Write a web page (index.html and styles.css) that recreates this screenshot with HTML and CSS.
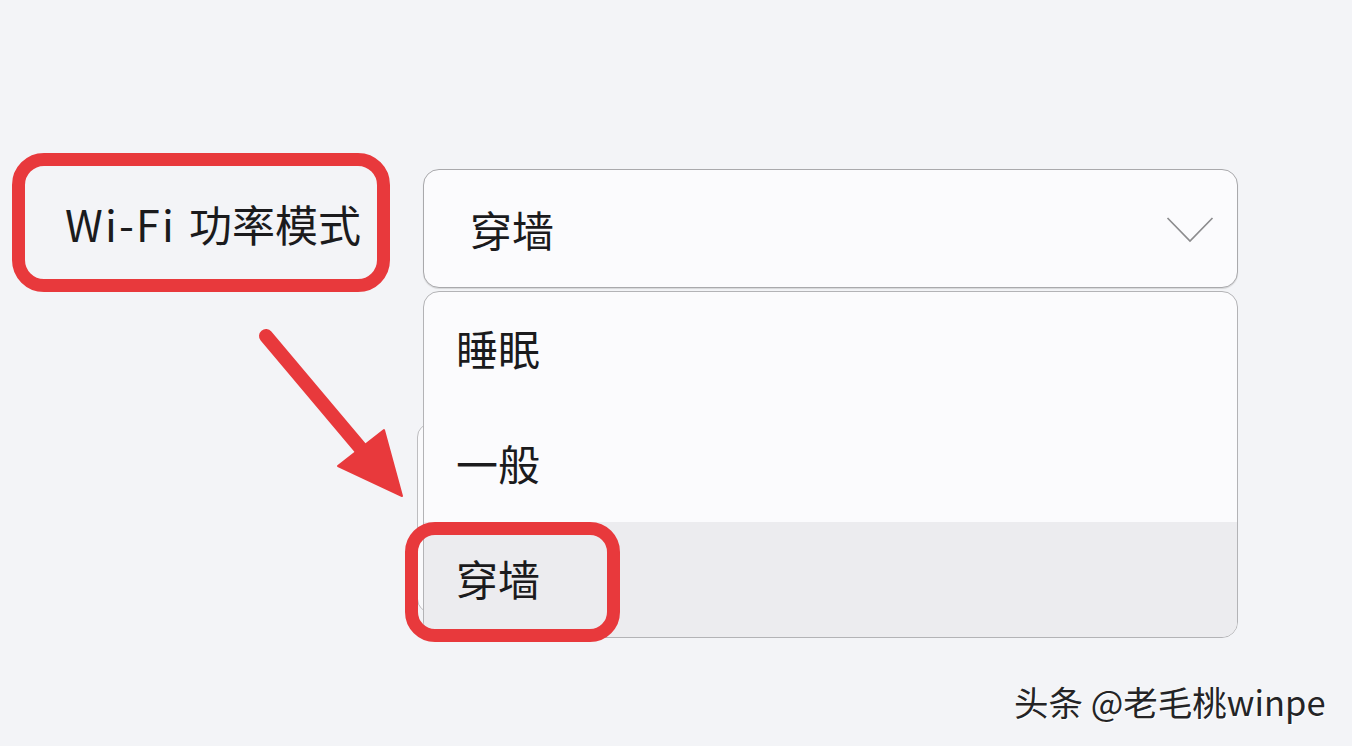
FILE: index.html
```html
<!DOCTYPE html>
<html lang="zh-CN">
<head>
<meta charset="utf-8">
<title>Wi-Fi 功率模式</title>
<link rel="stylesheet" href="styles.css">
</head>
<body>
<div class="page">
  <div class="row">
    <div class="label"><span class="latin">Wi-Fi</span> 功率模式</div>
    <div class="select">
      <span class="value">穿墙</span>
      <svg class="chev" width="48" height="28" viewBox="0 0 48 28"><polyline points="1.5,2 24,25 46.5,2" fill="none" stroke="#8c8c8e" stroke-width="1.7"/></svg>
    </div>
  </div>
  <div class="under"></div>
  <ul class="popup">
    <li class="item">睡眠</li>
    <li class="item">一般</li>
    <li class="item selected">穿墙</li>
  </ul>
  <div class="hl"></div>
  <svg class="arrow" width="170" height="190" viewBox="250 320 170 190">
    <line x1="266" y1="336" x2="362" y2="450" stroke="#e8393c" stroke-width="14" stroke-linecap="round"/>
    <polygon points="338,466 384,430 402,496" fill="#e8393c" stroke="#e8393c" stroke-width="2" stroke-linejoin="round"/>
  </svg>
  <div class="mark">头条 @老毛桃winpe</div>
</div>
</body>
</html>
```
FILE: styles.css
```css
* { box-sizing: border-box; }
html, body { margin: 0; padding: 0; }
body {
  background: #f3f4f7;
  font-family: "Noto Sans CJK SC", "Noto Sans", sans-serif;
  color: #1b1b1d;
}
.page {
  position: relative;
  width: 1352px;
  height: 746px;
  overflow: hidden;
}
.row {
  display: flex;
  align-items: flex-start;
  padding: 153px 0 0 12px;
}
.label {
  width: 378px;
  height: 139px;
  border: 13px solid #e8393c;
  border-radius: 32px;
  display: flex;
  align-items: center;
  gap: 0.3em;
  padding: 2px 0 0 40px;
  font-size: 43px;
  line-height: 1;
  white-space: nowrap;
  position: relative;
  z-index: 2;
}
.latin { letter-spacing: 2.2px; }
.select {
  margin: 16px 0 0 33px;
  width: 815px;
  height: 119px;
  border: 1px solid #a9a9ac;
  border-radius: 16px;
  background: #fbfbfd;
  box-shadow: 0 1px 1px rgba(0,0,0,0.12);
  display: flex;
  align-items: center;
  justify-content: space-between;
  padding: 0 23px 0 46px;
  font-size: 42px;
  line-height: 1;
}
.chev { display: block; margin-top: 2px; }
.under {
  position: absolute;
  left: 417px;
  top: 423px;
  width: 600px;
  height: 190px;
  border: 1px solid #bdbdc0;
  border-radius: 14px;
  background: #fafafc;
}
.popup {
  position: absolute;
  left: 423px;
  top: 291px;
  width: 815px;
  height: 347px;
  margin: 0;
  padding: 0;
  list-style: none;
  border: 1px solid #b3b3b6;
  border-radius: 16px;
  background: #fbfbfd;
  overflow: hidden;
  display: flex;
  flex-direction: column;
}
.item {
  flex: 1;
  display: flex;
  align-items: center;
  padding: 0 0 4px 32px;
  font-size: 42px;
  line-height: 1;
}
.item.selected { background: #ececef; }
.hl {
  position: absolute;
  left: 405px;
  top: 522px;
  width: 215px;
  height: 120px;
  border: 13px solid #e8393c;
  border-radius: 30px;
}
.arrow {
  position: absolute;
  left: 250px;
  top: 320px;
}
.mark {
  position: absolute;
  left: 1014px;
  top: 683px;
  font-size: 34.5px;
  line-height: 1.1;
  color: #242426;
  white-space: nowrap;
  text-shadow: 1px 1px 0 #ffffff;
}
```
